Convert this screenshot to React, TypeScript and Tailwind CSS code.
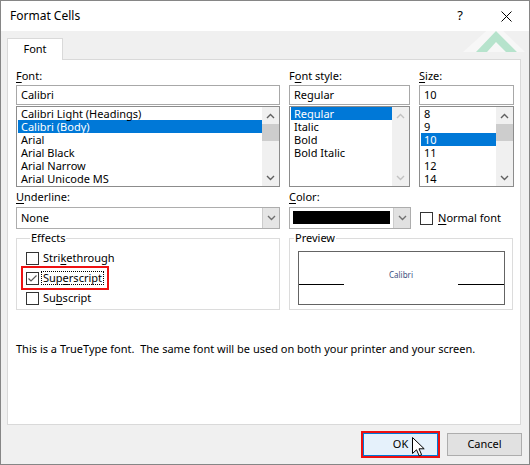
import React from 'react'

const fontItems = ['Calibri Light (Headings)', 'Calibri (Body)', 'Arial', 'Arial Black', 'Arial Narrow', 'Arial Unicode MS']
const styleItems = ['Regular', 'Italic', 'Bold', 'Bold Italic']
const sizeItems = ['8', '9', '10', '11', '12', '14']

function Chevron({ dir, color }: { dir: 'up' | 'down'; color: string }) {
  return (
    <svg width="9" height="6" viewBox="0 0 9 6">
      <path
        d={dir === 'up' ? 'M1 5 L4.5 1.5 L8 5' : 'M1 1 L4.5 4.5 L8 1'}
        fill="none"
        stroke={color}
        strokeWidth="1.4"
      />
    </svg>
  )
}

function Scrollbar({ disabled }: { disabled?: boolean }) {
  const c = disabled ? '#c2c2c2' : '#606060'
  return (
    <div className="w-[17px] bg-[#f0f0f0] flex flex-col">
      <div className="h-[17px] flex items-center justify-center">
        <Chevron dir="up" color={c} />
      </div>
      <div className="flex-1">
        {!disabled && <div className="h-[17px] bg-[#cdcdcd]" />}
      </div>
      <div className="h-[17px] flex items-center justify-center">
        <Chevron dir="down" color={c} />
      </div>
    </div>
  )
}

function ListBox({ items, selected, disabled }: { items: string[]; selected: number; disabled?: boolean }) {
  return (
    <div className="h-[81px] border border-[#8c8c8c] bg-white flex">
      <div className="flex-1 pl-px overflow-hidden">
        {items.map((it, i) => (
          <div
            key={it}
            className={
              i === selected
                ? 'h-[13px] leading-[13px] pl-[3px] bg-[#0078d7] text-white whitespace-nowrap'
                : 'h-[13px] leading-[13px] pl-[3px] text-black whitespace-nowrap'
            }
          >
            {it}
          </div>
        ))}
      </div>
      <Scrollbar disabled={disabled} />
    </div>
  )
}

function TextBox({ value }: { value: string }) {
  return (
    <div className="h-[20px] border border-[#a8a8a8] bg-white pl-[4px] flex items-center">{value}</div>
  )
}

function Label({ pre, u, post }: { pre?: string; u: string; post: string }) {
  return (
    <span>
      {pre}
      <span className="underline underline-offset-2">{u}</span>
      {post}
    </span>
  )
}

function CheckBox({ checked }: { checked?: boolean }) {
  return (
    <div className="w-[13px] h-[13px] border border-[#333333] bg-white shrink-0 flex items-center justify-center">
      {checked && (
        <svg width="11" height="11" viewBox="0 0 11 11">
          <path d="M1.5 5.5 L4 8 L9.5 2.5" fill="none" stroke="#5a5a5a" strokeWidth="1.2" />
        </svg>
      )}
    </div>
  )
}

function EffectRow({ pre, u, post, checked, focused }: { pre: string; u: string; post: string; checked?: boolean; focused?: boolean }) {
  return (
    <div className="h-[20px] flex items-center">
      <div className={focused ? 'flex items-center outline-2 outline-[#ee1111] outline-offset-[3px]' : 'flex items-center'}>
        <CheckBox checked={checked} />
        <span
          className={
            focused
              ? 'ml-[2px] px-px leading-[12px] border border-dotted border-black'
              : 'ml-[2px] px-px leading-[12px] border border-transparent'
          }
        >
          <Label pre={pre} u={u} post={post} />
        </span>
      </div>
    </div>
  )
}

export default function App() {
  return (
    <div className="w-[530px] h-[465px] border border-[#868686] bg-[#f0f0f0] relative overflow-hidden text-[11px] text-black font-['Segoe_UI','Noto_Sans',sans-serif]">
      {/* title bar */}
      <div className="h-[30px] bg-white flex items-center">
        <span className="pl-[9px] text-[12px]">Format Cells</span>
        <div className="ml-auto w-[46px] h-full flex items-center justify-center text-[13px]">?</div>
        <div className="w-[46px] h-full flex items-center justify-center">
          <svg width="11" height="11" viewBox="0 0 11 11">
            <path d="M0.5 0.5 L10.5 10.5 M10.5 0.5 L0.5 10.5" stroke="#000" strokeWidth="1" />
          </svg>
        </div>
      </div>

      {/* watermark */}
      <svg className="absolute left-[460px] top-[18px]" width="66" height="36" viewBox="460 18 66 36">
        <polygon points="462,51 494,22 524,51" fill="#ffffff" opacity="0.45" />
        <polygon points="475,51 495,30 516,51 505,51 495,41 486,51" fill="#b6e3cc" />
      </svg>

      {/* tabs */}
      <div className="pt-[7px] pl-[6px] flex">
        <div className="relative z-10 -mb-px w-[56px] h-[22px] border border-b-0 border-[#d9d9d9] bg-white flex items-center justify-center">
          Font
        </div>
      </div>

      {/* panel */}
      <div className="ml-[6px] w-[514px] h-[366px] border border-[#d9d9d9] bg-white pt-[8px] pl-[8px]">
        <div className="flex gap-[9px]">
          <div className="w-[264px]">
            <div className="h-[17px]">
              <Label u="F" post="ont:" />
            </div>
            <TextBox value="Calibri" />
            <div className="mt-px">
              <ListBox items={fontItems} selected={1} />
            </div>
          </div>
          <div className="w-[121px]">
            <div className="h-[17px]">
              <Label pre="F" u="o" post="nt style:" />
            </div>
            <TextBox value="Regular" />
            <div className="mt-px">
              <ListBox items={styleItems} selected={0} disabled />
            </div>
          </div>
          <div className="w-[95px]">
            <div className="h-[17px]">
              <Label u="S" post="ize:" />
            </div>
            <TextBox value="10" />
            <div className="mt-px">
              <ListBox items={sizeItems} selected={2} />
            </div>
          </div>
        </div>

        <div className="flex gap-[9px]">
          <div className="w-[264px]">
            <div className="h-[20px] flex items-center">
              <Label u="U" post="nderline:" />
            </div>
            <div className="h-[22px] border border-[#adadad] bg-white flex">
              <div className="flex-1 pl-[4px] flex items-center">None</div>
              <div className="w-[17px] bg-[#e5e5e5] border-l border-[#cccccc] flex items-center justify-center">
                <Chevron dir="down" color="#707070" />
              </div>
            </div>
          </div>
          <div className="w-[122px]">
            <div className="h-[20px] flex items-center">
              <Label u="C" post="olor:" />
            </div>
            <div className="h-[22px] border border-[#adadad] bg-white flex">
              <div className="flex-1 pl-[3px] py-[3px]">
                <div className="w-[97px] h-[13px] bg-black" />
              </div>
              <div className="w-[17px] bg-[#e1e1e1] border-l border-[#cccccc] flex items-center justify-center">
                <Chevron dir="down" color="#707070" />
              </div>
            </div>
          </div>
          <div className="w-[95px]">
            <div className="h-[20px]" />
            <div className="h-[22px] flex items-center">
              <CheckBox />
              <span className="ml-[5px]">
                <Label u="N" post="ormal font" />
              </span>
            </div>
          </div>
        </div>

        <div className="mt-px flex gap-[9px]">
          <fieldset className="w-[264px] h-[80px] border border-[#dcdcdc] pl-[9px]">
            <legend className="ml-[4px] px-px leading-[16px]">Effects</legend>
            <div className="mt-[2px]">
              <EffectRow pre="Stri" u="k" post="ethrough" />
              <EffectRow pre="Sup" u="e" post="rscript" checked focused />
              <EffectRow pre="Su" u="b" post="script" />
            </div>
          </fieldset>
          <fieldset className="w-[224px] h-[80px] border border-[#dcdcdc]">
            <legend className="ml-[4px] px-px leading-[16px]">Preview</legend>
            <div className="mt-[5px] ml-[8px] mr-[7px] h-[54px] border border-[#646464] flex">
              <div className="w-[45px] h-[33px] border-b border-black" />
              <div className="flex-1 flex justify-center pt-[18px]">
                <span className="text-[8px] leading-[10px] text-[#3b4f80]">Calibri</span>
              </div>
              <div className="w-[46px] h-[33px] border-b border-black" />
            </div>
          </fieldset>
        </div>

        <div className="mt-[31px] leading-[16px] whitespace-pre">
          This is a TrueType font.  The same font will be used on both your printer and your screen.
        </div>
      </div>

      {/* buttons */}
      <div className="mt-[8px] pr-[7px] flex justify-end gap-[9px]">
        <div className="relative w-[75px] h-[23px] border border-[#0078d7] bg-[#e5f1fb] flex items-center justify-center outline-2 outline-[#ee1111]">
          OK
          <svg className="absolute left-[48px] top-[3px]" width="14" height="20" viewBox="0 0 14 20">
            <path d="M0.5 0.5 L0.5 16.5 L4.5 12.8 L7.2 18.8 L9.6 17.7 L7 11.8 L12.2 11.8 Z" fill="#ffffff" stroke="#000000" strokeWidth="1" />
          </svg>
        </div>
        <div className="w-[75px] h-[23px] border border-[#adadad] bg-[#e1e1e1] flex items-center justify-center">
          Cancel
        </div>
      </div>
    </div>
  )
}
